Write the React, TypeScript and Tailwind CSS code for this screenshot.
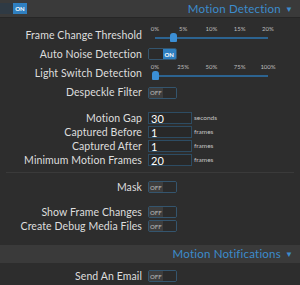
import React from "react";

const font = { fontFamily: 'Lato, "Open Sans", sans-serif' };

const Toggle = ({ on }: { on: boolean }) => {
  return (
    <div className="flex h-[12px] w-[29px] overflow-hidden rounded-[2px] border border-[#34556e] text-[6px] font-bold">
      {on ? (
        <>
          <div className="w-[14px] bg-[#2b2b2b]"></div>
          <div className="flex w-[14px] items-center justify-center bg-[#2f7fc0] text-white">ON</div>
        </>
      ) : (
        <>
          <div className="flex w-[14px] items-center justify-center bg-[#3d3d3d] text-[#a0a0a0]">OFF</div>
          <div className="w-[14px] bg-[#2b2b2b]"></div>
        </>
      )}
    </div>
  );
};

const Slider = ({ labels, pos }: { labels: string[]; pos: number }) => {
  return (
    <div className="relative h-[22px] w-[125px]">
      <div className="absolute left-[7px] right-[5px] top-0 flex justify-between text-[6px] text-[#bdbdbd]">
        {labels.map((l) => (
          <span key={l} className="w-0 flex justify-center whitespace-nowrap">
            {l}
          </span>
        ))}
      </div>
      <div className="absolute left-[7px] right-[5px] top-[13px] h-[2px] bg-[#2c6390]"></div>
      <div
        className="absolute top-[9px] h-[9px] w-[7px] rounded-t-[3px] rounded-b-[1px] bg-[#3b8fd6]"
        style={{ left: 4 + pos * 113 }}
      ></div>
    </div>
  );
};

const Row = ({ label, children, h = "h-[14px]" }: { label: string; children?: React.ReactNode; h?: string }) => (
  <div className={`flex items-center ${h}`}>
    <div className="w-[143px] shrink-0 pr-[1px] text-right text-[10.5px] leading-none tracking-[0.1px] text-[#dedede]">{label}</div>
    <div className="ml-[5px] flex items-center">{children}</div>
  </div>
);

const NumInput = ({ value, unit }: { value: string; unit: string }) => (
  <div className="flex items-center">
    <div className="flex h-[12px] w-[44px] items-center border border-[#2d4c63] bg-[#282828] pl-[2px] text-[11px] leading-none text-white">
      {value}
    </div>
    <span className="ml-[2px] text-[6.5px] text-[#c4c4c4]">{unit}</span>
  </div>
);

const SectionBar = ({ title }: { title: string }) => (
  <div className="flex h-[18px] items-center justify-end bg-[#3a3a3a] pr-[7px] text-[11.5px] tracking-[0.2px] text-[#3c8ccc]">
    <span>{title}</span>
    <span className="ml-[4px] text-[8px]">▼</span>
  </div>
);

export default function App() {
  return (
    <div className="h-[285px] w-[300px] overflow-hidden bg-[#2d2d2d]" style={font}>
      <div className="flex h-[18px] items-center justify-between border-b border-[#262626] bg-[#3a3a3a] pr-[7px]">
        <div className="flex h-[11px] items-center">
          <div className="h-full w-[13px] bg-[#2f3a44]"></div>
          <div className="flex h-full w-[14px] items-center justify-center bg-[#2f7fc0] text-[6px] font-bold text-white">ON</div>
        </div>
        <div className="flex items-center text-[11.5px] tracking-[0.2px] text-[#3c8ccc]">
          <span>Motion Detection</span>
          <span className="ml-[4px] text-[8px]">▼</span>
        </div>
      </div>

      <div className="mt-[7px]">
        <Row label="Frame Change Threshold" h="h-[20px]">
          <Slider labels={["0%", "5%", "10%", "15%", "20%"]} pos={0.16} />
        </Row>
        <Row label="Auto Noise Detection" h="h-[18px]">
          <Toggle on={true} />
        </Row>
        <Row label="Light Switch Detection" h="h-[20px]">
          <Slider labels={["0%", "25%", "50%", "75%", "100%"]} pos={0} />
        </Row>
        <Row label="Despeckle Filter" h="h-[19px]">
          <Toggle on={false} />
        </Row>
      </div>

      <div className="mt-[9px]">
        <Row label="Motion Gap">
          <NumInput value="30" unit="seconds" />
        </Row>
        <Row label="Captured Before">
          <NumInput value="1" unit="frames" />
        </Row>
        <Row label="Captured After">
          <NumInput value="1" unit="frames" />
        </Row>
        <Row label="Minimum Motion Frames">
          <NumInput value="20" unit="frames" />
        </Row>
      </div>

      <div className="mx-[6px] mt-[5px] border-t border-[#3a3a3a]"></div>

      <div className="mt-[6px]">
        <Row label="Mask" h="h-[16px]">
          <Toggle on={false} />
        </Row>
      </div>

      <div className="mt-[10px]">
        <Row label="Show Frame Changes">
          <Toggle on={false} />
        </Row>
        <Row label="Create Debug Media Files">
          <Toggle on={false} />
        </Row>
      </div>

      <div className="mt-[12px]">
        <SectionBar title="Motion Notifications" />
      </div>

      <div className="mt-[6px]">
        <Row label="Send An Email">
          <Toggle on={false} />
        </Row>
      </div>
    </div>
  );
}
